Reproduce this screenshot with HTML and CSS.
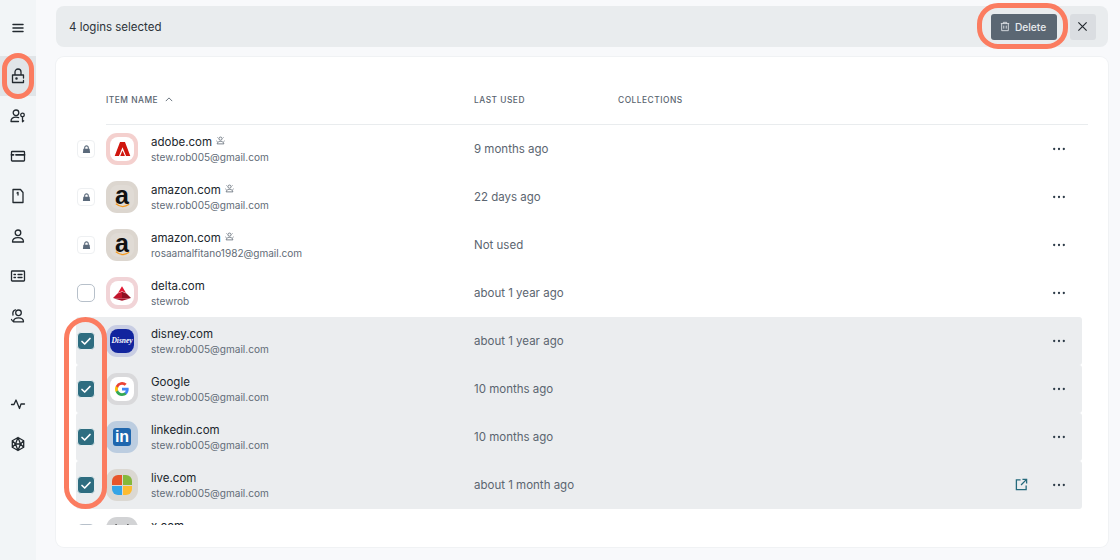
FILE: index.html
```html
<!DOCTYPE html>
<html lang="en">
<head>
<meta charset="utf-8">
<title>Logins</title>
<link rel="stylesheet" href="styles.css">
</head>
<body>
<svg class="defs" width="0" height="0" aria-hidden="true">
  <symbol id="i-lock" viewBox="0 0 10 10"><path d="M3 4.500V3a2 2 0 0 1 4 0v1.500" fill="none" stroke="currentColor" stroke-width="1.200"/><path d="M1.500 4.300h7l.5 4.700H1z" fill="currentColor"/></symbol>
  <symbol id="i-check" viewBox="0 0 16 16"><path d="M4 8.500l2.700 2.500L12 5.500" fill="none" stroke="#fff" stroke-width="1.700" stroke-linecap="round" stroke-linejoin="round"/></symbol>
  <symbol id="i-more" viewBox="0 0 16 4"><circle cx="2.500" cy="2" r="1.300"/><circle cx="8" cy="2" r="1.300"/><circle cx="13.500" cy="2" r="1.300"/></symbol>
  <symbol id="i-shared" viewBox="0 0 12 12"><circle cx="6" cy="3.500" r="2.100" fill="none" stroke="currentColor" stroke-width="1.100"/><path d="M1.500 10.500c.5-2.500 2-3.300 4.500-3.300s4 .8 4.500 3.300zM.5 6.500l1.500 1M11.500 6.500l-1.500 1M2 2l1 1M10 2L9 3" fill="none" stroke="currentColor" stroke-width="1.100"/></symbol>
</svg>

<aside class="rail">
  <button class="rail-btn rail-hamburger"><svg viewBox="0 0 16 16" class="rail-ico"><path d="M3 4.500h10M3 8h10M3 11.500h10"/></svg></button>
  <button class="rail-btn rail-active"><svg viewBox="0 0 16 16" class="rail-ico"><path d="M13.500 12.500V14.500H2.500V7h11v3M5 7V4a3 3 0 0 1 6 0v3"/><circle cx="6.500" cy="10.500" r=".6"/></svg></button>
  <button class="rail-btn"><svg viewBox="0 0 16 16" class="rail-ico"><circle cx="6" cy="4.800" r="2.800"/><path d="M1 13.500c0-3 2-4.300 5-4.300 1 0 1.900.2 2.600.5M1 13.500h7.500"/><circle cx="12.500" cy="7" r="1.800"/><path d="M12.500 8.800v5l1.200-1"/></svg></button>
  <button class="rail-btn"><svg viewBox="0 0 16 16" class="rail-ico"><rect x="1.500" y="3.500" width="13" height="9.500" rx=".7"/><path d="M1.500 6.800h2M6 6.800h8.500" stroke-width="1.800"/></svg></button>
  <button class="rail-btn"><svg viewBox="0 0 16 16" class="rail-ico"><path d="M3 1.500h7.500l2.500 3v10H3zM7 5l1-.6V7"/></svg></button>
  <button class="rail-btn"><svg viewBox="0 0 16 16" class="rail-ico"><circle cx="8" cy="4.800" r="2.800"/><path d="M2.500 14c0-3 2.400-4.300 5.500-4.300s5.500 1.300 5.500 4.300z"/></svg></button>
  <button class="rail-btn"><svg viewBox="0 0 16 16" class="rail-ico"><rect x="1.500" y="3" width="13" height="10" rx=".7"/><path d="M8 6.500h4M8 9.500h4M4 6.500h1.500M4 9.500h1.500"/></svg></button>
  <button class="rail-btn"><svg viewBox="0 0 16 16" class="rail-ico"><circle cx="8.500" cy="4.800" r="2.800"/><path d="M3.500 13.800c0-2.700 2.200-4 5-4s5 1.300 5 4zM5.500 1.800C3.300 2.500 2.500 4.500 3 7M1.500 11.500l1 1.500"/></svg></button>
  <div class="rail-spacer"></div>
  <button class="rail-btn"><svg viewBox="0 0 16 16" class="rail-ico"><path d="M1.500 8.500h2.500L6 4l3.500 8.500L11 8h3.500"/></svg></button>
  <button class="rail-btn"><svg viewBox="0 0 16 16" class="rail-ico"><path d="M8 1.500l5.700 3.200v6.600L8 14.500l-5.700-3.200V4.700zM8 1.500L5.500 8 8 14.500 10.500 8zM2.300 4.700L5.500 8l-3.200 3.300M13.700 4.700L10.500 8l3.200 3.300M5.500 8h5"/></svg></button>
</aside>

<main class="content">
  <section class="selbar">
    <span class="selbar-text">4 logins selected</span>
    <div class="selbar-actions">
      <button class="btn-delete"><svg viewBox="0 0 12 12" class="btn-delete-ico"><path d="M1 2.500h10M4 2.500V1h4v1.500M2 2.500V11h8V2.500M4.500 5v3.500M7.500 5v3.500"/></svg>Delete</button>
      <button class="btn-close"><svg viewBox="0 0 12 12" class="btn-close-ico"><path d="M1.500 1.500l9 9M10.500 1.500l-9 9"/></svg></button>
    </div>
  </section>

  <section class="card">
    <div class="thead">
      <span class="th th-name">ITEM NAME<svg viewBox="0 0 10 6" class="sort-ico"><path d="M1 5l4-4 4 4"/></svg></span>
      <span class="th th-used">LAST USED</span>
      <span class="th">COLLECTIONS</span>
    </div>
    <div class="rows">
      <div class="row">
        <span class="lockbox"><svg class="lock-ico"><use href="#i-lock"/></svg></span>
        <span class="tile tile-adobe"><span class="tile-in tile-in-white"><svg viewBox="0 0 24 22" class="logo logo-adobe"><path fill="#d0160e" d="M8.500 1h7L23 21h-6l-5-12.500L7 21H1z"/><path fill="#d0160e" d="M12 13l3.500 8H8.800z"/></svg></span></span>
        <div class="name"><div class="name-main">adobe.com<svg class="shared-ico"><use href="#i-shared"/></svg></div><div class="name-sub">stew.rob005@gmail.com</div></div>
        <span class="used">9 months ago</span>
        <svg class="more-ico"><use href="#i-more"/></svg>
      </div>
      <div class="row">
        <span class="lockbox"><svg class="lock-ico"><use href="#i-lock"/></svg></span>
        <span class="tile tile-amazon"><span class="tile-in tile-in-amazon"><span class="amazon-a">a</span><svg viewBox="0 0 20 6" class="amazon-smile"><path d="M2 1c5 4 11 4 16 .5"/></svg></span></span>
        <div class="name"><div class="name-main">amazon.com<svg class="shared-ico"><use href="#i-shared"/></svg></div><div class="name-sub">stew.rob005@gmail.com</div></div>
        <span class="used">22 days ago</span>
        <svg class="more-ico"><use href="#i-more"/></svg>
      </div>
      <div class="row">
        <span class="lockbox"><svg class="lock-ico"><use href="#i-lock"/></svg></span>
        <span class="tile tile-amazon"><span class="tile-in tile-in-amazon"><span class="amazon-a">a</span><svg viewBox="0 0 20 6" class="amazon-smile"><path d="M2 1c5 4 11 4 16 .5"/></svg></span></span>
        <div class="name"><div class="name-main">amazon.com<svg class="shared-ico"><use href="#i-shared"/></svg></div><div class="name-sub">rosaamalfitano1982@gmail.com</div></div>
        <span class="used">Not used</span>
        <svg class="more-ico"><use href="#i-more"/></svg>
      </div>
      <div class="row">
        <span class="cbox"></span>
        <span class="tile tile-delta"><span class="tile-in tile-in-white"><svg viewBox="0 0 20 16" class="logo logo-delta"><path fill="#e01933" d="M10 0l4.500 7.500L10 5.500 5.500 7.500z"/><path fill="#c2152c" d="M5 8l5-2v7H0z"/><path fill="#8f0f22" d="M15 8l-5-2v7h10z"/><path fill="#a8122a" d="M0 13.300h20L10 16z"/></svg></span></span>
        <div class="name"><div class="name-main">delta.com</div><div class="name-sub">stewrob</div></div>
        <span class="used">about 1 year ago</span>
        <svg class="more-ico"><use href="#i-more"/></svg>
      </div>
      <div class="row row-sel">
        <span class="cbox cbox-on"><svg class="check-ico"><use href="#i-check"/></svg></span>
        <span class="tile tile-disney"><span class="tile-in disney-badge">Disney</span></span>
        <div class="name"><div class="name-main">disney.com</div><div class="name-sub">stew.rob005@gmail.com</div></div>
        <span class="used">about 1 year ago</span>
        <svg class="more-ico"><use href="#i-more"/></svg>
      </div>
      <div class="row row-sel">
        <span class="cbox cbox-on"><svg class="check-ico"><use href="#i-check"/></svg></span>
        <span class="tile tile-google"><span class="tile-in tile-in-white"><svg viewBox="0 0 18 18" class="google-g"><path fill="#4285f4" d="M17.600 9.200c0-.6-.1-1.200-.2-1.800H9v3.400h4.800a4.100 4.100 0 0 1-1.800 2.700v2.200h2.900c1.700-1.600 2.700-3.900 2.700-6.500z"/><path fill="#34a853" d="M9 18c2.400 0 4.500-.8 5.900-2.200L12 13.500c-.8.500-1.800.9-3 .9-2.300 0-4.300-1.600-5-3.700H1v2.300A9 9 0 0 0 9 18z"/><path fill="#fbbc05" d="M4 10.700a5.400 5.400 0 0 1 0-3.400V5H1a9 9 0 0 0 0 8z"/><path fill="#ea4335" d="M9 3.600c1.300 0 2.500.5 3.400 1.300L15 2.400A9 9 0 0 0 1 5l3 2.300c.7-2.100 2.700-3.700 5-3.700z"/></svg></span></span>
        <div class="name"><div class="name-main">Google</div><div class="name-sub">stew.rob005@gmail.com</div></div>
        <span class="used">10 months ago</span>
        <svg class="more-ico"><use href="#i-more"/></svg>
      </div>
      <div class="row row-sel">
        <span class="cbox cbox-on"><svg class="check-ico"><use href="#i-check"/></svg></span>
        <span class="tile tile-linkedin"><span class="li-badge">in</span></span>
        <div class="name"><div class="name-main">linkedin.com</div><div class="name-sub">stew.rob005@gmail.com</div></div>
        <span class="used">10 months ago</span>
        <svg class="more-ico"><use href="#i-more"/></svg>
      </div>
      <div class="row row-sel">
        <span class="cbox cbox-on"><svg class="check-ico"><use href="#i-check"/></svg></span>
        <span class="tile tile-live"><span class="ms-grid"><i class="ms ms-r"></i><i class="ms ms-g"></i><i class="ms ms-b"></i><i class="ms ms-y"></i></span></span>
        <div class="name"><div class="name-main">live.com</div><div class="name-sub">stew.rob005@gmail.com</div></div>
        <span class="used">about 1 month ago</span>
        <svg viewBox="0 0 14 14" class="open-ico"><path d="M6 2H1.500v10.500H12V8M8 1.500h4.500V6M12.500 1.500L6.500 7.500"/></svg>
        <svg class="more-ico"><use href="#i-more"/></svg>
      </div>
      <div class="row">
        <span class="cbox"></span>
        <span class="tile tile-x"><svg viewBox="0 0 20 20" class="logo logo-x"><path d="M3 2l14 16M17 2L3 18" fill="none" stroke="#222" stroke-width="3"/></svg></span>
        <div class="name"><div class="name-main">x.com</div><div class="name-sub">stew.rob005@gmail.com</div></div>
        <span class="used"></span>
      </div>
    </div>
  </section>
  <div class="ring ring-lock"></div>
  <div class="ring ring-delete"></div>
  <div class="ring ring-checks"></div>
</main>
</body>
</html>
```

FILE: styles.css
```css
* { box-sizing: border-box; }
html, body { margin: 0; height: 100%; }
body {
  width: 1120px; height: 560px; overflow: hidden; display: flex;
  background: #f8f9fb; color: #20262c;
  font-family: Inter, "Liberation Sans", sans-serif; font-size: 12px;
}
.defs { position: absolute; }
button { border: 0; padding: 0; font: inherit; background: none; }

.rail { width: 36px; height: 560px; background: #f2f5f7; display: flex; flex-direction: column; padding-top: 8px; flex: none; }
.rail-btn { height: 40px; width: 36px; display: flex; align-items: center; justify-content: center; flex: none; }
.rail-hamburger { margin-bottom: 8px; }
.rail-active { background: #e1e5e8; }
.rail-spacer { height: 48px; flex: none; }
.rail-ico { width: 16px; height: 16px; fill: none; stroke: #22292f; stroke-width: 1.300; stroke-linejoin: round; stroke-linecap: round; }
.rail-hamburger .rail-ico { stroke-width: 1.500; }

.content { flex: 1; padding: 6px 12px 13px 20px; display: flex; flex-direction: column; gap: 10px; }
.selbar { height: 41px; background: #e9ecee; border-radius: 8px; display: flex; align-items: center; justify-content: space-between; padding: 0 12px 0 13px; flex: none; }
.selbar-text { font-size: 11.500px; color: #2c3339; }
.selbar-actions { display: flex; align-items: center; gap: 13px; }
.btn-delete { width: 66px; height: 26px; background: #5b6773; color: #e8ebee; border-radius: 3px; font-size: 10.200px; font-weight: 500; display: flex; align-items: center; justify-content: center; gap: 5px; padding-right: 2px; }
.btn-delete-ico { width: 10px; height: 11px; fill: none; stroke: #e8ebee; stroke-width: 1; }
.btn-close { width: 26px; height: 26px; background: #dadde1; border-radius: 3px; display: flex; align-items: center; justify-content: center; padding-right: 2px; }
.btn-close-ico { width: 11px; height: 11px; fill: none; stroke: #22282e; stroke-width: 1.300; }

.card { flex: 1; background: #fff; border-radius: 8px; box-shadow: 0 0 0 1px #f0f2f4; padding: 0 20px 22px 20px; overflow: hidden; }
.thead { height: 68px; margin-left: 30px; display: flex; align-items: center; padding-top: 18px; border-bottom: 1px solid #e9ecee; }
.th { font-size: 8.400px; font-weight: 500; letter-spacing: .5px; color: #58636e; }
.th-name { width: 368px; display: flex; align-items: center; gap: 7px; }
.th-used { width: 144px; }
.sort-ico { width: 8px; height: 5px; fill: none; stroke: #58636e; stroke-width: 1.100; }

.rows { height: 400px; overflow: hidden; }
.row { height: 48px; display: flex; align-items: center; position: relative; }
.row-sel { background: #ebedef; border-radius: 3px; width: 1006px; }
.lockbox { width: 18px; height: 18px; margin-left: 1px; border: 1px solid #eef0f2; border-radius: 4px; background: #fff; display: flex; align-items: center; justify-content: center; flex: none; }
.lock-ico { width: 9px; height: 9px; color: #5b6a7b; }
.cbox { width: 18px; height: 18px; margin-left: 1px; border-radius: 5px; border: 1px solid #b7c0ca; background: #fff; flex: none; display: flex; align-items: center; justify-content: center; }
.cbox-on { background: #2e6d80; border-color: #e6eef0; border-radius: 4px; }
.check-ico { width: 16px; height: 16px; }

.tile { width: 32px; height: 32px; margin-left: 11px; border-radius: 11px; display: flex; align-items: center; justify-content: center; flex: none; }
.tile-in { width: 24px; height: 24px; border-radius: 8px; display: flex; align-items: center; justify-content: center; flex: none; }
.tile-in-white { background: #fff; }
.logo { display: block; }
.tile-adobe { background: #f4d0ce; }
.logo-adobe { width: 17px; height: 16px; }
.tile-amazon { background: #dcd6cf; }
.tile-in-amazon { background: #e0dbd5; flex-direction: column; }
.amazon-a { font: 700 25px/16px "Liberation Sans", sans-serif; color: #111; }
.amazon-smile { width: 19px; height: 5px; fill: none; stroke: #f49a20; stroke-width: 1.500; flex: none; }
.tile-delta { background: #f1d4d7; }
.logo-delta { width: 18px; height: 15px; }
.tile-disney { background: #c8cde3; }
.disney-badge { background: #12259e; color: #fff; font: italic 700 7.500px/24px "Liberation Serif", serif; }
.tile-google { background: #d9d9db; }
.google-g { width: 14px; height: 14px; }
.tile-linkedin { background: #bccde0; }
.li-badge { width: 18px; height: 18px; border-radius: 3px; background: #1f67ae; color: #fff; font: 700 16px/18px "Liberation Sans", sans-serif; text-align: center; }
.tile-live { background: #dbd8d2; }
.ms-grid { width: 20px; height: 20px; border-radius: 6px; overflow: hidden; display: grid; grid-template-columns: 1fr 1fr; gap: 1px; }
.ms { display: block; }
.ms-r { background: #e8562a; } .ms-g { background: #85b83a; } .ms-b { background: #36a5e6; } .ms-y { background: #fdbb30; }
.tile-x { background: #d2d3d5; }
.logo-x { width: 20px; height: 20px; }

.name { width: 323px; margin-left: 13px; flex: none; }
.name-main { font-size: 11.500px; line-height: 15px; color: #20262c; display: flex; align-items: center; gap: 4px; }
.name-sub { font-size: 10.050px; line-height: 14px; color: #626c77; }
.shared-ico { width: 9px; height: 9px; color: #626c77; margin-bottom: 3px; }
.used { font-size: 11.500px; color: #5b6570; flex: 1; padding-bottom: 1px; }
.more-ico { width: 14px; height: 4px; fill: #2c3a47; position: absolute; left: 976px; top: 22px; }
.open-ico { width: 13px; height: 13px; fill: none; stroke: #256a7c; stroke-width: 1.400; position: absolute; left: 939px; top: 17px; }

.ring { position: absolute; border: 5px solid #fb7c60; }
.ring-lock { left: 2px; top: 53px; width: 32px; height: 46px; border-radius: 16px; }
.ring-delete { left: 977px; top: 3px; width: 91px; height: 46px; border-radius: 21px; }
.ring-checks { left: 64px; top: 317px; width: 43px; height: 192px; border-radius: 22px; }
```
